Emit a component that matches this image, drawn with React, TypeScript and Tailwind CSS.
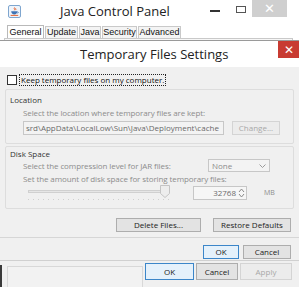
import type { JSX } from 'react';

function JavaIcon(): JSX.Element {
  return (
    <svg width="13" height="13" viewBox="0 0 13 13" className="shrink-0">
      <rect x="0.5" y="0.5" width="12" height="12" rx="1.5" fill="#eef4fb" stroke="#7fa6cf" />
      <path d="M6.5 2.5c-1.2 1 1 1.6-.2 2.8M7.8 3.2c-.8.7.6 1.1-.2 1.9" stroke="#e2531c" strokeWidth="0.9" fill="none" />
      <path d="M3.2 6.3h6.2c0 2-1.3 3.2-3.1 3.2S3.2 8.3 3.2 6.3z" fill="#3f74b5" />
      <path d="M9.4 6.8c1.2 0 1.2 1.4 0 1.4" stroke="#3f74b5" strokeWidth="0.8" fill="none" />
      <path d="M2.6 10.4h7.6" stroke="#e2531c" strokeWidth="0.9" />
    </svg>
  );
}

function Btn({
  label,
  className = '',
  primary = false,
  disabled = false,
}: {
  label: string;
  className?: string;
  primary?: boolean;
  disabled?: boolean;
}): JSX.Element {
  return (
    <div
      className={`flex h-[14px] items-center justify-center border text-[8px] leading-none ${
        primary
          ? 'border-[#3c86c9] bg-[#e5f1fb] text-[#222]'
          : disabled
            ? 'border-[#d4d4d4] bg-[#ececec] text-[#a8a8a8]'
            : 'border-[#adadad] bg-[#e3e3e3] text-[#222]'
      } ${className}`}
    >
      {label}
    </div>
  );
}

function Slider(): JSX.Element {
  const ticks = Array.from({ length: 29 }, (_, i) => i);
  return (
    <div className="relative h-[16px] w-[146px]">
      <div className="absolute left-0 top-[5px] h-[3px] w-[140px] border border-[#d0d0d0] bg-[#e6e6e6]" />
      <svg className="absolute left-[132px] top-0" width="10" height="13" viewBox="0 0 10 13">
        <path d="M0.5 0.5h9v8l-4.5 4-4.5-4z" fill="#ededed" stroke="#c4c4c4" />
      </svg>
      <div className="absolute left-0 top-[14px] flex gap-[4px]">
        {ticks.map((t) => (
          <div key={t} className="h-[1px] w-[1px] bg-[#cfcfcf]" />
        ))}
      </div>
    </div>
  );
}

export default function App(): JSX.Element {
  return (
    <div className="h-[287px] w-[299px] overflow-hidden bg-[#f0f0f0] font-['Open_Sans',sans-serif] text-[#1e1e1e]">
      {/* Java Control Panel title bar */}
      <div className="flex h-[22px] items-start bg-white">
        <div className="ml-[8px] mt-[5px]">
          <JavaIcon />
        </div>
        <span className="ml-[39px] mt-[5px] text-[13px] leading-none text-[#222]">Java Control Panel</span>
        <div className="ml-auto mr-[12px] flex h-[17px] items-start">
          <div className="mr-[16px] mt-[10px] h-[2px] w-[10px] bg-[#333]" />
          <div className="mr-[6px] mt-[6px] h-[7px] w-[10px] border border-[#555]" />
          <div className="flex h-[17px] w-[35px] items-center justify-center bg-[#cfcfcf] text-[13px] leading-none text-white">
            ✕
          </div>
        </div>
      </div>

      {/* tabs */}
      <div className="relative h-[18px] bg-white">
        <div className="flex items-end pl-[7px] pt-[3px] font-['Liberation_Sans',sans-serif] text-[9px] leading-none text-[#111]">
          <div className="flex h-[13px] w-[37px] items-center justify-center border border-b-0 border-[#b9b9b9] bg-white">General</div>
          <div className="ml-[1px] flex h-[12px] w-[33px] items-center justify-center border border-b-0 border-[#c9c9c9] bg-[#f4f4f4]">Update</div>
          <div className="ml-[1px] flex h-[12px] w-[22px] items-center justify-center border border-b-0 border-[#c9c9c9] bg-[#f4f4f4]">Java</div>
          <div className="ml-[1px] flex h-[12px] w-[35px] items-center justify-center border border-b-0 border-[#c9c9c9] bg-[#f4f4f4]">Security</div>
          <div className="ml-[1px] flex h-[12px] w-[43px] items-center justify-center border border-b-0 border-[#c9c9c9] bg-[#f4f4f4]">Advanced</div>
        </div>
        <div className="ml-[4px] mr-[6px] h-[2px] border-l border-r border-t border-[#c9c9c9] bg-[#f7f7f7]" />
      </div>

      {/* Temporary Files Settings dialog */}
      <div className="border-t border-[#9a9a9a] bg-[#f0f0f0]">
        <div className="flex h-[26px] items-center bg-white">
          <span className="ml-[80px] text-[13px] leading-none text-[#222]">Temporary Files Settings</span>
          <div className="mb-[9px] ml-auto flex h-[17px] w-[21px] items-center justify-center bg-[#c83b32] text-[12px] leading-none text-white">
            ✕
          </div>
        </div>

        <div className="pb-[1px] pt-[7px] text-[8px] leading-none">
          <div className="flex items-center pl-[7px]">
            <div className="h-[10px] w-[10px] border border-[#333] bg-white" />
            <span className="ml-[2px] border border-dotted border-[#222] px-[1px] py-[1px] text-[#111]">
              Keep temporary files on my computer.
            </span>
          </div>

          {/* Location */}
          <div className="mx-[5px] mt-[3px] h-[55px] rounded-[2px] border border-[#dddddd] pl-[4px] pt-[6px]">
            <div className="text-[#333]">Location</div>
            <div className="ml-[13px] mt-[5px] tracking-[-0.1px] text-[#8c8c8c]">Select the location where temporary files are kept:</div>
            <div className="ml-[13px] mt-[4px] flex items-center">
              <div className="flex h-[14px] w-[201px] items-center overflow-hidden whitespace-nowrap border border-[#c7c7c7] bg-[#f3f3f3] px-[2px] text-[#6a6a6a]">
                srd\AppData\LocalLow\Sun\Java\Deployment\cache
              </div>
              <Btn label="Change..." disabled className="ml-[8px] w-[48px]" />
            </div>
          </div>

          {/* Disk Space */}
          <div className="mx-[5px] mt-[2px] h-[63px] rounded-[2px] border border-[#dddddd] pl-[4px] pt-[3px]">
            <div className="text-[#333]">Disk Space</div>
            <div className="ml-[13px] mt-[1px] flex items-center">
              <span className="tracking-[-0.1px] text-[#8c8c8c]">Select the compression level for JAR files:</span>
              <div className="ml-auto mr-[23px] flex h-[13px] w-[62px] items-center justify-between border border-[#c7c7c7] bg-[#f3f3f3] px-[3px] text-[#8c8c8c]">
                None
                <svg width="7" height="4" viewBox="0 0 7 4">
                  <path d="M0.5 0.5l3 3 3-3" stroke="#9a9a9a" fill="none" />
                </svg>
              </div>
            </div>
            <div className="ml-[13px] mt-[3px] tracking-[-0.1px] text-[#8c8c8c]">Set the amount of disk space for storing temporary files:</div>
            <div className="ml-[18px] mt-[2px] flex items-start">
              <Slider />
              <div className="ml-[19px] mt-[1px] flex h-[14px] w-[54px] items-center justify-end border border-[#c7c7c7] bg-[#f6f6f6] pr-[1px] text-[#6a6a6a]">
                32768
                <svg className="ml-[2px]" width="7" height="10" viewBox="0 0 7 10">
                  <path d="M1 4l2.5-3 2.5 3M1 6l2.5 3 2.5-3" stroke="#8a8a8a" fill="none" />
                </svg>
              </div>
              <span className="ml-[17px] mt-[4px] text-[7px] text-[#8c8c8c]">MB</span>
            </div>
          </div>

          <div className="mr-[8px] mt-[9px] flex justify-end gap-[12px]">
            <Btn label="Delete Files..." className="w-[85px]" />
            <Btn label="Restore Defaults" className="w-[78px]" />
          </div>

          <div className="mt-[5px] h-[1px] bg-[#d6d6d6]" />

          <div className="mr-[8px] mt-[7px] flex justify-end gap-[4px]">
            <Btn label="OK" primary className="w-[36px]" />
            <Btn label="Cancel" className="w-[48px]" />
          </div>
        </div>
      </div>

      {/* Java Control Panel footer */}
      <div className="flex border-t border-[#d0d0d0] pt-[2px]">
        <div className="mt-[2px] h-[30px] w-[2px] bg-[#3a3a3a]" />
        <div className="ml-[5px] mt-[3px] h-[30px] w-[136px] border border-[#d8d8d8] bg-[#f2f2f2]" />
        <div className="ml-[2px] flex gap-[2px]">
          <Btn label="OK" primary className="h-[17px] w-[49px]" />
          <Btn label="Cancel" className="h-[17px] w-[42px]" />
          <Btn label="Apply" disabled className="h-[17px] w-[52px]" />
        </div>
      </div>
    </div>
  );
}
